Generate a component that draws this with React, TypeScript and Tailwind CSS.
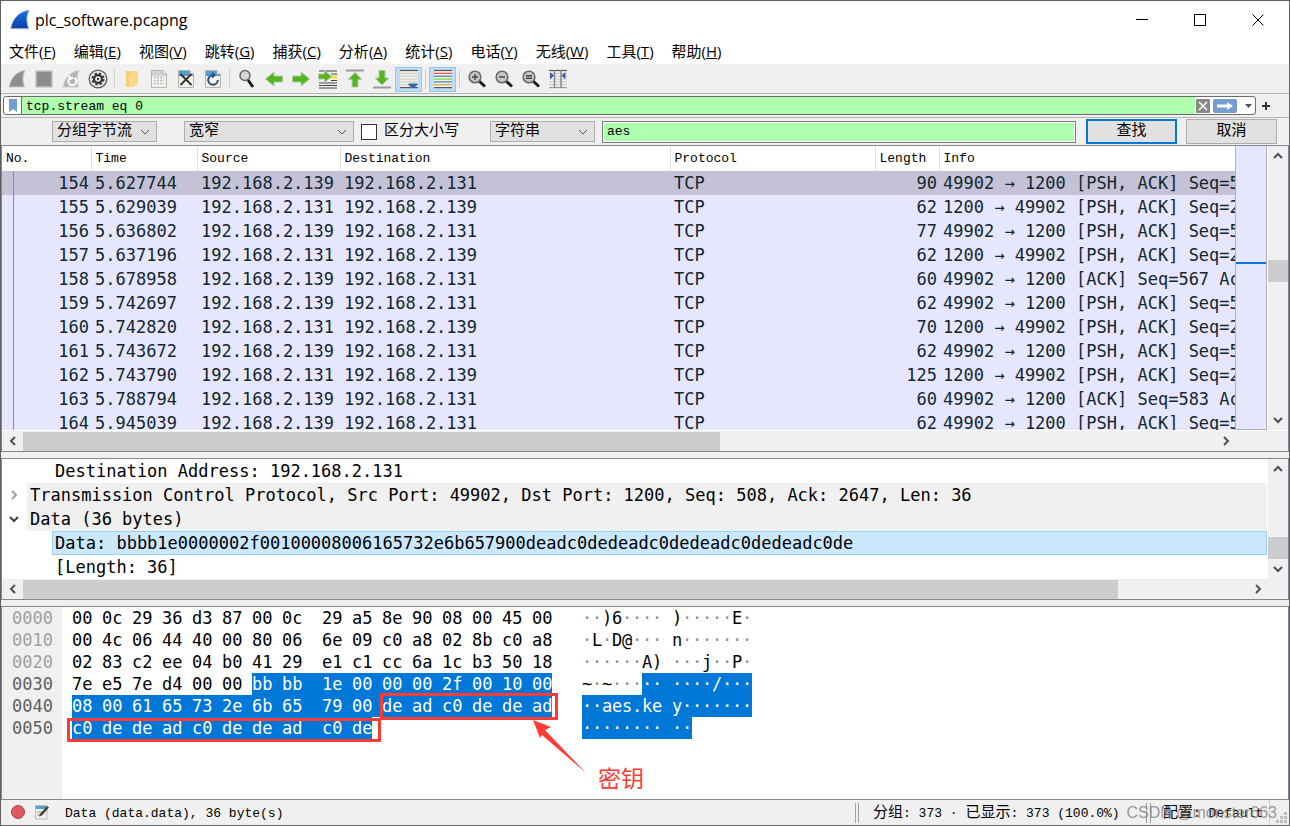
import React from "react";
import clsx from "clsx";

const menus = [
  { label: "文件", hotkey: "F" },
  { label: "编辑", hotkey: "E" },
  { label: "视图", hotkey: "V" },
  { label: "跳转", hotkey: "G" },
  { label: "捕获", hotkey: "C" },
  { label: "分析", hotkey: "A" },
  { label: "统计", hotkey: "S" },
  { label: "电话", hotkey: "Y" },
  { label: "无线", hotkey: "W" },
  { label: "工具", hotkey: "T" },
  { label: "帮助", hotkey: "H" },
];

const A = "192.168.2.139";
const B = "192.168.2.131";

const packets = [
  { no: 154, time: "5.627744", src: A, dst: B, len: 90, info: "49902 → 1200 [PSH, ACK] Seq=508 Ack=2647" },
  { no: 155, time: "5.629039", src: B, dst: A, len: 62, info: "1200 → 49902 [PSH, ACK] Seq=2647 Ack=544" },
  { no: 156, time: "5.636802", src: A, dst: B, len: 77, info: "49902 → 1200 [PSH, ACK] Seq=544 Ack=2655" },
  { no: 157, time: "5.637196", src: B, dst: A, len: 62, info: "1200 → 49902 [PSH, ACK] Seq=2655 Ack=567" },
  { no: 158, time: "5.678958", src: A, dst: B, len: 60, info: "49902 → 1200 [ACK] Seq=567 Ack=2663" },
  { no: 159, time: "5.742697", src: A, dst: B, len: 62, info: "49902 → 1200 [PSH, ACK] Seq=567 Ack=2663" },
  { no: 160, time: "5.742820", src: B, dst: A, len: 70, info: "1200 → 49902 [PSH, ACK] Seq=2663 Ack=575" },
  { no: 161, time: "5.743672", src: A, dst: B, len: 62, info: "49902 → 1200 [PSH, ACK] Seq=575 Ack=2679" },
  { no: 162, time: "5.743790", src: B, dst: A, len: 125, info: "1200 → 49902 [PSH, ACK] Seq=2679 Ack=583" },
  { no: 163, time: "5.788794", src: A, dst: B, len: 60, info: "49902 → 1200 [ACK] Seq=583 Ack=2750" },
  { no: 164, time: "5.945039", src: A, dst: B, len: 62, info: "49902 → 1200 [PSH, ACK] Seq=583 Ack=2750" },
];

const hexRows = [
  { offset: "0000", bytes: "00 0c 29 36 d3 87 00 0c 29 a5 8e 90 08 00 45 00", ascii: "··)6····)·····E·" },
  { offset: "0010", bytes: "00 4c 06 44 40 00 80 06 6e 09 c0 a8 02 8b c0 a8", ascii: "·L·D@···n·······" },
  { offset: "0020", bytes: "02 83 c2 ee 04 b0 41 29 e1 c1 cc 6a 1c b3 50 18", ascii: "······A)···j··P·" },
  { offset: "0030", bytes: "7e e5 7e d4 00 00 bb bb 1e 00 00 00 2f 00 10 00", ascii: "~·~·········/···" },
  { offset: "0040", bytes: "08 00 61 65 73 2e 6b 65 79 00 de ad c0 de de ad", ascii: "··aes.key·······" },
  { offset: "0050", bytes: "c0 de de ad c0 de de ad c0 de", ascii: "··········" },
];

// first byte of the selected data field
const SELECTED_FROM = 54;

const Icon: React.FC<{ children: React.ReactNode }> = ({ children }) => (
  <svg viewBox="0 0 20 20" className="size-5" aria-hidden="true">
    {children}
  </svg>
);

const Fin = ({ fill, stroke }: { fill: string; stroke: string }) => (
  <path
    d="M2 18C4 9 9 2.500 18 1.500C15.500 6.500 15.500 12 17.500 18Z"
    fill={fill}
    stroke={stroke}
  />
);

const Page = ({ head }: { head: string }) => (
  <>
    <path d="M2.500 1.500H14L17.500 5V18.500H2.500Z" fill="#f4f4ee" stroke="#b4b4ac" />
    <path d="M3 2H14L17 5V7H3Z" fill={head} />
    <path d="M14 1.500V5H17.500" fill="#fff" stroke="#b4b4ac" />
  </>
);

const Lines = ({ colors }: { colors: string[] }) => (
  <>
    <path d="M1 1H19V19H1Z" fill="#f1f1ec" />
    {colors.map((c, i) => (
      <path key={i} d={`M1 ${1.5 + i * 2.85}H19`} stroke={c} strokeWidth="1.2" />
    ))}
  </>
);

const GreenRight = "M1.500 7H10V3L18.500 10L10 17V13H1.500Z";

const Lens = ({ children }: { children?: React.ReactNode }) => (
  <>
    <path d="M12 12L18 17.500" stroke="#1b1b1b" strokeWidth="3" />
    <circle cx="8" cy="8" r="5.800" fill="#c5c8ca" stroke="#6a6a6a" strokeWidth="1.600" />
    {children}
  </>
);

const toolGroups = [
  [
    { name: "开始捕获", icon: <Fin fill="#8f8f8f" stroke="#c8c8c8" /> },
    { name: "停止捕获", icon: <path d="M2 2H18V18H2Z" fill="#8c8c8c" stroke="#c4c4c4" strokeWidth="1.500" /> },
    {
      name: "重新开始捕获",
      icon: (
        <>
          <Fin fill="#b5b5b5" stroke="#cfcfcf" />
          <path d="M13.500 9A4 4 0 1 1 8.500 9.500M8 6.500L9 10L12 8.500" fill="none" stroke="#fff" strokeWidth="2" />
        </>
      ),
    },
    {
      name: "捕获选项",
      icon: (
        <>
          <circle cx="10" cy="10" r="8.800" fill="#f4f4f4" stroke="#666" strokeWidth="1.500" />
          <circle cx="10" cy="10" r="5.500" fill="none" stroke="#444" strokeWidth="2.200" strokeDasharray="2.600 1.720" />
          <circle cx="10" cy="10" r="3.900" fill="none" stroke="#333" strokeWidth="2.200" />
          <circle cx="10" cy="10" r="1.200" fill="#333" />
        </>
      ),
    },
  ],
  [
    {
      name: "打开",
      icon: (
        <>
          <path d="M4 2H10L11 4V18H4Z" fill="#f6cf74" />
          <path d="M7 6L16 4V16L7 18.500Z" fill="#fbdc8f" />
          <path d="M11 2H16V14H11Z" fill="#f9d888" />
        </>
      ),
    },
    {
      name: "保存",
      icon: (
        <>
          <Page head="#d4d4d4" />
          <path d="M5 8.500H15M5 11.500H15M5 14.500H15" stroke="#bbb" strokeWidth="1.500" strokeDasharray="2 1" />
        </>
      ),
    },
    {
      name: "关闭",
      icon: (
        <>
          <Page head="#4f9fd2" />
          <path d="M4.500 5L15.500 16M15.500 5L4.500 16" stroke="#333" strokeWidth="2" />
        </>
      ),
    },
    {
      name: "重新加载",
      icon: (
        <>
          <Page head="#4f9fd2" />
          <path d="M14.800 11A4.800 4.800 0 1 1 10 6.200" fill="none" stroke="#2c4a7c" strokeWidth="2" />
          <path d="M9 3L13 6.300L9 9.500Z" fill="#2c4a7c" />
        </>
      ),
    },
  ],
  [
    {
      name: "查找分组",
      icon: (
        <>
          <path d="M11 11L16 18" stroke="#1b1b1b" strokeWidth="3" />
          <circle cx="8" cy="6.500" r="5" fill="#d4d7d8" stroke="#666" strokeWidth="1.500" />
        </>
      ),
    },
    { name: "上一个", icon: <path d={GreenRight} transform="rotate(180 10 10)" fill="#55b520" stroke="#b3c9a3" /> },
    { name: "下一个", icon: <path d={GreenRight} fill="#55b520" stroke="#b3c9a3" /> },
    {
      name: "转到分组",
      icon: (
        <>
          <path d="M1 2H19M13 5H19M1 14H19M1 16.500H19M1 19H19M13 11.500H19" stroke="#444" />
          <path d="M12 8H19" stroke="#f7dc3b" strokeWidth="3" />
          <path d="M0.500 5H6.500V1.500L13.500 7.500L6.500 13.500V10H0.500Z" fill="#55b520" stroke="#b3c9a3" />
        </>
      ),
    },
    {
      name: "首个分组",
      icon: (
        <>
          <path d="M1 1.500H19" stroke="#9a9a9a" strokeWidth="2" />
          <path d="M10 3.500L17 10.500H13V18H7V10.500H3Z" fill="#55b520" stroke="#b3c9a3" />
        </>
      ),
    },
    {
      name: "最后分组",
      icon: (
        <>
          <path d="M1 18.500H19" stroke="#9a9a9a" strokeWidth="2" />
          <path d="M10 16L17 9H13V1.500H7V9H3Z" fill="#55b520" stroke="#b3c9a3" />
        </>
      ),
    },
    {
      name: "自动滚动",
      active: true,
      icon: (
        <>
          <Lines colors={["#555", "#ccc", "#ccc", "#ccc", "#ccc", "#ccc", "#555"]} />
          <path d="M9.500 14.500H18.500V16L14 19.500L9.500 16Z" fill="#3465a4" />
        </>
      ),
    },
  ],
  [
    {
      name: "着色规则",
      active: true,
      icon: <Lines colors={["#555", "#ef4b43", "#4b79b5", "#72d52c", "#4b79b5", "#d0a93b", "#555"]} />,
    },
  ],
  [
    { name: "放大", icon: <Lens><path d="M5 8H11M8 5V11" stroke="#444" strokeWidth="1.400" /></Lens> },
    { name: "缩小", icon: <Lens><path d="M5 8H11" stroke="#444" strokeWidth="1.400" /></Lens> },
    { name: "正常大小", icon: <Lens><path d="M5 6.800H11M5 9.200H11" stroke="#444" strokeWidth="1.600" /></Lens> },
    {
      name: "调整列宽",
      icon: (
        <>
          <Lines colors={["#555", "#ccc", "#ccc", "#ccc", "#ccc", "#ccc", "#999"]} />
          <path d="M6.500 1V19M13 1V19" stroke="#888" strokeWidth="1.500" />
          <path d="M2.500 4L5.500 6.500L2.500 9.500ZM17 4L14 6.500L17 9.500Z" fill="#3465a4" stroke="#3465a4" />
        </>
      ),
    },
  ],
];

const Chevron = ({ className }: { className?: string }) => (
  <svg viewBox="0 0 10 10" className={clsx("size-[10px] shrink-0", className)} aria-hidden="true">
    <path d="M1 3L5 7L9 3" fill="none" stroke="currentColor" strokeWidth="2" />
  </svg>
);

const Combo: React.FC<{ label: string; value: string; className: string }> = ({ label, value, className }) => (
  <div className={clsx("flex h-[21px] items-center border border-[#adadad] bg-[#e1e1e1] pr-[6px] pl-1", className)}>
    <select
      aria-label={label}
      className="min-w-0 flex-1 appearance-none bg-transparent pt-px text-[15px] leading-5 outline-none"
    >
      <option>{value}</option>
    </select>
    <svg viewBox="0 0 10 10" className="pointer-events-none size-[10px]" aria-hidden="true">
      <path d="M1 3L5 7L9 3" fill="none" stroke="#555" />
    </svg>
  </div>
);

const VScroll: React.FC<{ className: string }> = ({ className }) => (
  <div className="ml-px flex w-[20px] shrink-0 flex-col items-center bg-[#f0f0f0] py-[5px] text-[#505050]">
    <Chevron className="rotate-180" />
    <div className="flex w-full flex-1 flex-col">
      <div className={className} />
      <div className="h-[22px] bg-[#cdcdcd]" />
    </div>
    <Chevron />
  </div>
);

const HScroll: React.FC<{ thumb: string; corner: string }> = ({ thumb, corner }) => (
  <div className="flex h-5 items-center bg-[#f0f0f0] text-[#505050]">
    <div className="flex w-[21px] justify-center">
      <Chevron className="rotate-90" />
    </div>
    <div className="h-[19px] flex-1">
      <div className={clsx("h-full bg-[#cdcdcd]", thumb)} />
    </div>
    <div className="flex w-[21px] justify-center">
      <Chevron className="-rotate-90" />
    </div>
    <div className={corner} />
  </div>
);

const TitleBar: React.FC = () => (
  <header className="flex h-[37px] items-center bg-white pr-[2px] pl-2">
    <svg viewBox="0 0 20 20" className="size-[22px]" aria-hidden="true">
      <defs>
        <linearGradient id="fin" x1="0" y1="0" x2="0" y2="1">
          <stop offset="0" stopColor="#1a73d9" />
          <stop offset="1" stopColor="#0a3fa8" />
        </linearGradient>
      </defs>
      <path d="M1.500 18C3 9 9 2 18.500 1C15.500 6.500 16 12 18 18Z" fill="url(#fin)" stroke="#b9cbe6" strokeWidth="0.800" />
    </svg>
    <h1 className="flex-1 pl-1 font-['Open_Sans','Noto_Sans_CJK_SC',sans-serif] text-base">plc_software.pcapng</h1>
    {[
      { name: "最小化", d: "M0 5.500H12" },
      { name: "最大化", d: "M0.500 0.500H11.500V11.500H0.500Z" },
      { name: "关闭窗口", d: "M0.500 0.500L11.500 11.500M11.500 0.500L0.500 11.500" },
    ].map((b) => (
      <button key={b.name} aria-label={b.name} className="flex h-full w-[58px] items-center justify-center">
        <svg viewBox="0 0 12 12" className="size-3" aria-hidden="true">
          <path d={b.d} fill="none" stroke="#000" />
        </svg>
      </button>
    ))}
  </header>
);

const Toolbar: React.FC = () => (
  <div className="flex h-[29px] items-center border-b border-[#b4b4b4] bg-[#f0f0f0] pl-[2px]">
    {toolGroups.map((group, g) => (
      <div key={g} className="flex items-center">
        {g > 0 && <div className="mx-[3px] h-5 w-px bg-[#d0d0d0]" />}
        {group.map((tool) => (
          <button
            key={tool.name}
            aria-label={tool.name}
            className={clsx(
              "flex h-[25px] w-[27px] items-center justify-center border",
              "active" in tool ? "border-[#90c8f6] bg-[#c0dcf3]" : "border-transparent",
            )}
          >
            <Icon>{tool.icon}</Icon>
          </button>
        ))}
      </div>
    ))}
  </div>
);

const FilterBar: React.FC = () => (
  <div className="flex h-6 items-center border-b border-[#b4b4b4] bg-[#f0f0f0] pl-[2px]">
    <div className="flex h-[19px] flex-1 items-center rounded-[3px] border border-[#6b6b6b] bg-white">
      <button aria-label="书签" className="flex w-[17px] justify-center">
        <svg viewBox="0 0 8 13" className="h-[13px] w-2" aria-hidden="true">
          <path d="M0 0H8V13L4 10L0 13Z" fill="#729fcf" />
        </svg>
      </button>
      <input
        aria-label="显示过滤器"
        defaultValue="tcp.stream eq 0"
        className="h-full min-w-0 flex-1 border-l border-[#6b6b6b] bg-[#afffaf] pt-px pl-1 outline-none"
      />
      <button aria-label="清除" className="ml-px">
        <svg viewBox="0 0 14 14" className="size-[14px]" aria-hidden="true">
          <rect width="14" height="14" rx="1" fill="#888a85" />
          <path d="M3 3L11 11M11 3L3 11" stroke="#fff" strokeWidth="1.500" />
        </svg>
      </button>
      <button aria-label="应用" className="ml-[3px]">
        <svg viewBox="0 0 24 14" className="h-[14px] w-6" aria-hidden="true">
          <rect width="24" height="14" rx="2" fill="#729fcf" />
          <path d="M4 5.500H14V3L20 7L14 11V8.500H4Z" fill="#fff" />
        </svg>
      </button>
      <button aria-label="历史" className="flex w-[18px] justify-center pl-1">
        <svg viewBox="0 0 7 4" className="h-1 w-[7px]" aria-hidden="true">
          <path d="M0 0H7L3.500 4Z" fill="#555" />
        </svg>
      </button>
    </div>
    <button aria-label="添加" className="flex w-[33px] pl-[6px]">
      <svg viewBox="0 0 8 8" className="size-2" aria-hidden="true">
        <path d="M4 0V8M0 4H8" stroke="#333" strokeWidth="2" />
      </svg>
    </button>
  </div>
);

const FindBar: React.FC = () => (
  <div className="flex h-[27px] items-center bg-[#f0f0f0] pr-3 pl-[51px]">
    <Combo label="搜索范围" value="分组字节流" className="w-[105px]" />
    <Combo label="字符宽度" value="宽窄" className="ml-[27px] w-[170px]" />
    <input
      id="case"
      type="checkbox"
      className="ml-[7px] size-4 appearance-none border border-[#333] bg-white checked:bg-[#0078d7]"
    />
    <label htmlFor="case" className="w-[113px] pt-px pl-[7px] text-[15px]">
      区分大小写
    </label>
    <Combo label="搜索类型" value="字符串" className="w-[105px]" />
    <input
      aria-label="搜索内容"
      defaultValue="aes"
      className="mr-2 ml-[7px] h-[22px] min-w-0 flex-1 border border-[#7a7a7a] bg-[#afffaf] pl-1 ring-1 ring-white outline-none ring-inset"
    />
    <button className="ml-[2px] h-[25px] w-[91px] border-2 border-[#0078d7] bg-[#e1e1e1] pt-px text-[15px] leading-5">查找</button>
    <button className="ml-[9px] h-[25px] w-[91px] border border-[#adadad] bg-[#e1e1e1] pt-px text-[15px] leading-5">取消</button>
  </div>
);

const PacketList: React.FC = () => (
  <section className="border border-[#828790] bg-white">
    <div className="flex h-[284px]">
      <div className="min-w-0 flex-1 overflow-hidden">
        <table className="w-full table-fixed border-collapse text-left whitespace-nowrap">
          <thead>
            <tr className="h-[25px] bg-white [&>th]:border-r [&>th]:border-[#e0e0e0] [&>th]:pl-1 [&>th]:font-normal [&>th:last-child]:border-r-0">
              <th className="w-[89px]">No.</th>
              <th className="w-[106px]">Time</th>
              <th className="w-[143px]">Source</th>
              <th className="w-[330px]">Destination</th>
              <th className="w-[205px]">Protocol</th>
              <th className="w-16">Length</th>
              <th>Info</th>
            </tr>
          </thead>
          <tbody className="font-['DejaVu_Sans_Mono',monospace] text-[17px] leading-6 text-[#12272e]">
            {packets.map((p, i) => (
              <tr key={p.no} className={clsx("h-6 [&>td]:p-0 [&>td]:pl-1", i === 0 ? "bg-[#c5c2d8]" : "bg-[#e7e6ff]")}>
                <td>
                  <div className="ml-[7px] border-l border-[#8d8c9c] pr-[2px] text-right">{p.no}</div>
                </td>
                <td>{p.time}</td>
                <td>{p.src}</td>
                <td>{p.dst}</td>
                <td>TCP</td>
                <td>
                  <div className="pr-[2px] text-right">{p.len}</div>
                </td>
                <td className="overflow-hidden">{p.info}</td>
              </tr>
            ))}
          </tbody>
        </table>
      </div>
      {/* Intelligent scrollbar map */}
      <div className="w-8 shrink-0 border border-t-0 border-[#b0b0b8] bg-[#e7e6ff] pt-[116px]">
        <div className="h-[2px] bg-[#0078d7]" />
      </div>
      <VScroll className="h-[39%]" />
    </div>
    <div className="pt-px">
      <HScroll thumb="w-[58.5%]" corner="w-[52px]" />
    </div>
  </section>
);

const PacketDetails: React.FC = () => (
  <section className="border border-[#828790] bg-white">
    <div className="flex">
      <ul className="min-w-0 flex-1 overflow-hidden font-['DejaVu_Sans_Mono',monospace] text-[17px] leading-6 whitespace-pre">
        <li className="pl-[53px]">Destination Address: 192.168.2.131</li>
        <li className="flex items-center">
          <span className="w-[25px] pl-[7px] text-[#a0a0a0]">
            <Chevron className="-rotate-90" />
          </span>
          <span className="flex-1 bg-[#f0f0f0] pl-[3px]">
            Transmission Control Protocol, Src Port: 49902, Dst Port: 1200, Seq: 508, Ack: 2647, Len: 36
          </span>
        </li>
        <li className="flex items-center">
          <span className="w-[25px] pl-[7px] text-[#404040]">
            <Chevron />
          </span>
          <span className="flex-1 bg-[#f0f0f0] pl-[3px]">Data (36 bytes)</span>
        </li>
        <li className="ml-[50px] border border-[#99d1ff] bg-[#cce8ff] pl-[2px] leading-[22px]">
          Data: bbbb1e0000002f00100008006165732e6b657900deadc0dedeadc0dedeadc0dedeadc0de
        </li>
        <li className="pl-[53px]">[Length: 36]</li>
      </ul>
      <VScroll className="h-[63px]" />
    </div>
    <HScroll thumb="w-[89.500%]" corner="w-5" />
  </section>
);

const HexView: React.FC = () => (
  <section className="relative flex flex-1 border border-[#828790] bg-white font-['DejaVu_Sans_Mono','Noto_Sans_CJK_SC',monospace] text-[17px] leading-[22px]">
    <div className="w-[60px] bg-[#f0f0f0] pl-[10px]">
      {hexRows.map((row, r) => (
        <div key={row.offset} className={r < 3 ? "text-[#a0a0a0]" : "text-[#606060]"}>
          {row.offset}
        </div>
      ))}
    </div>
    <div className="w-[510px] pl-[10px]">
      {hexRows.map((row, r) => (
        <div key={row.offset} className="flex">
          {row.bytes.split(" ").map((byte, i, all) => (
            <span
              key={i}
              className={clsx(
                "h-[22px]",
                i === all.length - 1 ? "w-5" : i === 7 ? "w-10" : "w-[30px]",
                r * 16 + i >= SELECTED_FROM && "bg-[#0078d7] text-white",
              )}
            >
              {byte}
            </span>
          ))}
        </div>
      ))}
    </div>
    <div className="pl-[10px]">
      {hexRows.map((row, r) => (
        <div key={row.offset} className="flex">
          {row.ascii.split("").map((ch, i) => (
            <span
              key={i}
              className={clsx(
                "h-[22px]",
                i === 7 ? "w-5" : "w-[10px]",
                r * 16 + i >= SELECTED_FROM ? "bg-[#0078d7] text-white" : ch === "·" && "text-[#909090]",
              )}
            >
              {ch}
            </span>
          ))}
        </div>
      ))}
    </div>

    {/* Key annotation */}
    <div className="absolute top-[86px] left-[378px] h-[27px] w-[178px] border-3 border-[#ff3b36]" />
    <div className="absolute top-[111px] left-[65px] h-[24px] w-[314px] border-3 border-[#ff3b36]" />
    <svg viewBox="0 0 54 54" className="absolute top-[113px] left-[531px] size-[54px]" aria-hidden="true">
      <path d="M0 0L18 7L12 10L53 53L9 15L7 18Z" fill="#ff3b36" />
    </svg>
    <div className="absolute top-[156px] left-[596px] text-[23px] leading-8 text-[#ff3b36]">密钥</div>
  </section>
);

const StatusBar: React.FC = () => (
  <footer className="relative flex h-[25px] items-center bg-[#f0f0f0] pl-[9px] whitespace-pre">
    <button aria-label="专家信息">
      <svg viewBox="0 0 16 16" className="size-4" aria-hidden="true">
        <circle cx="8" cy="7" r="6.500" fill="#e0595c" stroke="#a8434a" />
      </svg>
    </button>
    <button aria-label="捕获文件注释" className="ml-2">
      <svg viewBox="0 0 16 16" className="size-4" aria-hidden="true">
        <path d="M1.500 0.500H13V14H1.500Z" fill="#f1f1ea" stroke="#bcbcb4" />
        <path d="M2 1H12V4H2Z" fill="#4f9fd2" />
        <path d="M3 7H9M3 10H7" stroke="#9a9a9a" />
        <path d="M5.500 9.500L13 1L15 2.500L8 10.500L5 11.500Z" fill="#444" />
      </svg>
    </button>
    <span className="flex-1 pt-[2px] pl-[15px]">Data (data.data), 36 byte(s)</span>
    <span className="flex h-5 w-[18px] shrink-0">
      <span className="w-[4px] border-x border-[#a0a0a0]" />
    </span>
    <span className="w-[273px] pt-[2px]">
      <span className="text-[15px]">分组</span>: 373 · <span className="text-[15px]">已显示</span>: 373 (100.0%)
    </span>
    <span className="flex h-5 w-[17px] shrink-0">
      <span className="w-[5px] border-x border-[#a0a0a0]" />
    </span>
    <span className="w-[106px] pt-[2px]">
      <span className="text-[15px]">配置</span>: Default
    </span>
    <span className="flex h-full w-5 items-end border-l border-[#d0d0d0] pb-[2px] pl-[6px]">
      <svg viewBox="0 0 11 11" className="size-[11px]" aria-hidden="true">
        <path d="M8 0H11V3H8ZM4 4H7V7H4ZM8 4H11V7H8ZM0 8H3V11H0ZM4 8H7V11H4ZM8 8H11V11H8Z" fill="#bfbfbf" />
      </svg>
    </span>
    <span className="absolute right-3 bottom-[2px] font-['Liberation_Sans',sans-serif] text-base leading-5 text-[#808080]/80">
      CSDN @monster663
    </span>
  </footer>
);

const App: React.FC = () => {
  return (
    <div className="flex min-h-screen flex-col border border-[#606060] bg-[#f0f0f0] font-['Liberation_Mono','Noto_Sans_CJK_SC',monospace] text-[13px] leading-5 text-black">
      <TitleBar />
      <nav className="flex h-[27px] items-center gap-[18px] border-b border-[#f0f0f0] bg-white pl-2 font-['Open_Sans','Noto_Sans_CJK_SC',sans-serif] text-[15px]">
        {menus.map((m) => (
          <button key={m.hotkey} className="whitespace-nowrap">
            {m.label}(<u>{m.hotkey}</u>)
          </button>
        ))}
      </nav>
      <Toolbar />
      <FilterBar />
      <FindBar />
      <main className="flex flex-1 flex-col gap-[6px]">
        <PacketList />
        <PacketDetails />
        <HexView />
      </main>
      <StatusBar />
    </div>
  );
};

export default App;
